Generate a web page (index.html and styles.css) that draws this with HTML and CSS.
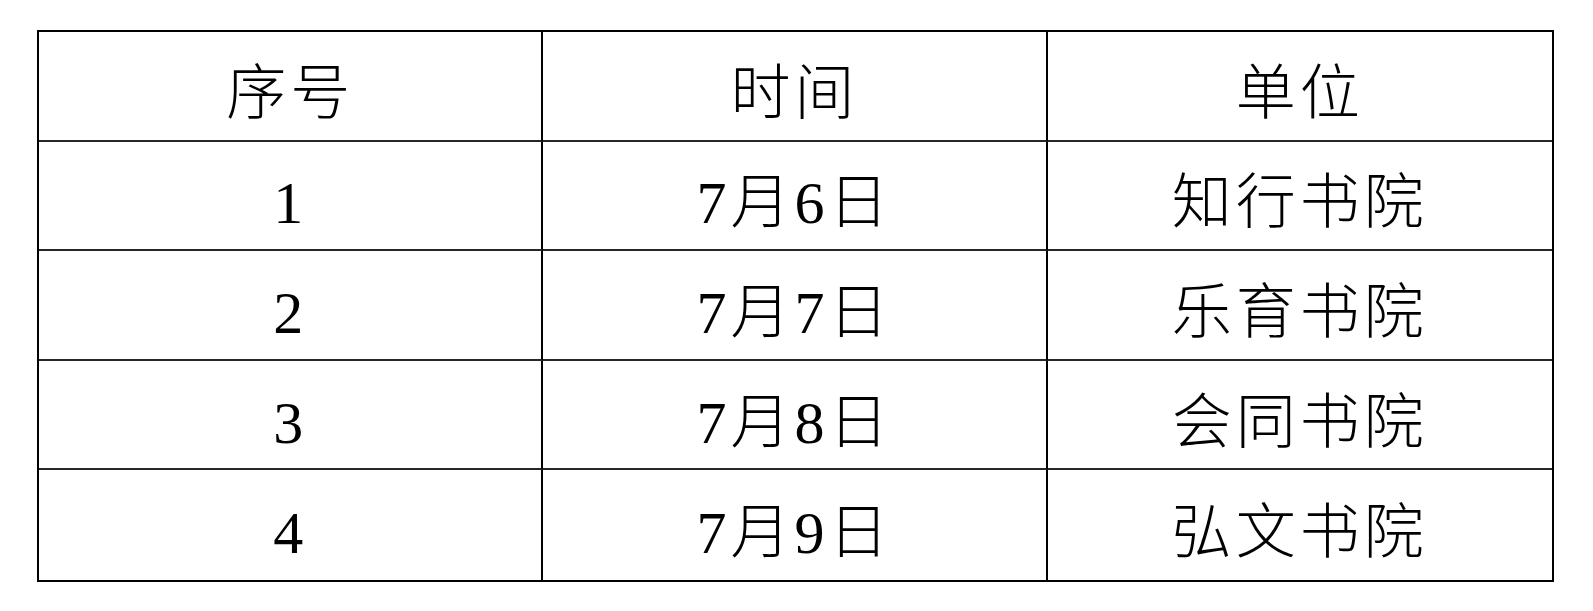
FILE: index.html
```html
<!DOCTYPE html>
<html lang="zh">
<head>
<meta charset="utf-8">
<link rel="stylesheet" href="styles.css">
</head>
<body>
<div class="page">
  <div class="table">
    <div class="cell head">序号</div>
    <div class="cell head">时间</div>
    <div class="cell head last">单位</div>

    <div class="cell num">1</div>
    <div class="cell">7月6日</div>
    <div class="cell last">知行书院</div>

    <div class="cell num">2</div>
    <div class="cell">7月7日</div>
    <div class="cell last">乐育书院</div>

    <div class="cell num">3</div>
    <div class="cell">7月8日</div>
    <div class="cell last">会同书院</div>

    <div class="cell num bottom">4</div>
    <div class="cell bottom">7月9日</div>
    <div class="cell last bottom">弘文书院</div>
  </div>
</div>
</body>
</html>
```

FILE: styles.css
```css
html, body {
  margin: 0;
  padding: 0;
  background: #ffffff;
}

.page {
  padding: 30px 0 0 37px;
}

.table {
  width: 1517px;
  height: 552px;
  box-sizing: border-box;
  border: 2px solid #000;
  display: grid;
  grid-template-columns: repeat(3, 1fr);
  grid-template-rows: repeat(5, 1fr);
}

.cell {
  display: flex;
  align-items: center;
  justify-content: center;
  box-sizing: border-box;
  border-right: 2px solid #000;
  border-bottom: 2px solid #262626;
  padding-top: 16px;
  font-family: "Liberation Serif", "Noto Sans CJK SC", serif;
  font-weight: 300;
  font-size: 60px;
  letter-spacing: 4px;
  color: #000;
  line-height: 1;
}

.cell.last {
  border-right: none;
}

.cell.bottom {
  border-bottom: none;
}
```
